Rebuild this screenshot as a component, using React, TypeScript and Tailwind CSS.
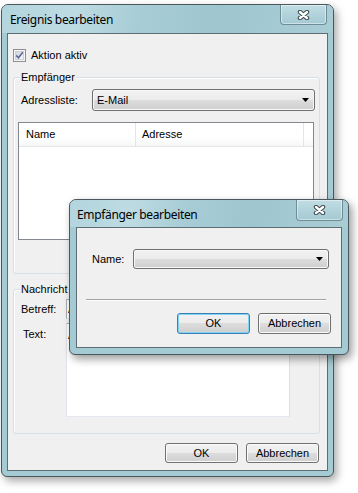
import React from "react";

function CloseX() {
  return (
    <svg width="13" height="10" viewBox="0 0 13 10">
      <path d="M3 2 L10 8 M10 2 L3 8" stroke="#3b4850" strokeWidth="4.4" strokeLinecap="round" fill="none" />
      <path d="M3 2 L10 8 M10 2 L3 8" stroke="#ffffff" strokeWidth="2.4" strokeLinecap="round" fill="none" />
    </svg>
  );
}

function CloseButton({ h }: { h: string }) {
  return (
    <div
      className={`flex ${h} w-[47px] items-center justify-center self-start rounded-b-[4px] border border-t-0 border-[#6e8d96] bg-[linear-gradient(to_bottom,#c1dde3_0%,#b2d3db_50%,#a4cad3_100%)] shadow-[inset_0_0_0_1px_rgba(255,255,255,0.45)]`}
    >
      <CloseX />
    </div>
  );
}

function Arrow() {
  return (
    <svg width="7" height="4" viewBox="0 0 7 4">
      <polygon points="0,0 7,0 3.5,4" fill="#000" />
    </svg>
  );
}

function Combo({ cls, text }: { cls: string; text?: string }) {
  return (
    <div
      className={`flex items-center justify-between rounded-[3px] border border-[#707070] bg-[linear-gradient(to_bottom,#f2f2f2_0%,#ebebeb_50%,#dddddd_50%,#cfcfcf_100%)] shadow-[inset_0_0_0_1px_#f8f8f8] pl-[4px] ${cls}`}
    >
      <span className="text-[11px] leading-[13px] text-black">{text}</span>
      <Arrow />
    </div>
  );
}

function Btn({ children, focused, cls }: { children: React.ReactNode; focused?: boolean; cls: string }) {
  return (
    <div
      className={`flex items-center justify-center rounded-[3px] border bg-[linear-gradient(to_bottom,#f2f2f2_0%,#ebebeb_50%,#dddddd_50%,#cfcfcf_100%)] text-[11px] leading-[13px] text-black ${
        focused
          ? "border-[#3c7fb1] shadow-[inset_0_0_0_1px_#7fd3f5]"
          : "border-[#707070] shadow-[inset_0_0_0_1px_#fbfbfb]"
      } ${cls}`}
    >
      {children}
    </div>
  );
}

function CheckBox() {
  return (
    <svg width="13" height="13" viewBox="0 0 13 13">
      <defs>
        <linearGradient id="cbg" x1="0" y1="0" x2="1" y2="1">
          <stop offset="0" stopColor="#d3d3d3" />
          <stop offset="1" stopColor="#f8f8f8" />
        </linearGradient>
      </defs>
      <rect x="0.5" y="0.5" width="12" height="12" fill="#f6f6f6" stroke="#8e8f8f" />
      <rect x="2.5" y="2.5" width="8" height="8" fill="url(#cbg)" stroke="#cfcfcf" />
      <path d="M3.2 6.4 L5.4 8.8 L9.8 3.2" stroke="#5a6c9e" strokeWidth="1.6" fill="none" />
    </svg>
  );
}

function Group({ label, cls, children }: { label: string; cls: string; children?: React.ReactNode }) {
  return (
    <div className={`relative rounded-[3px] border border-[#d5dfe5] shadow-[inset_1px_1px_0_#ffffff] ${cls}`}>
      <span className="absolute left-[6px] top-[-7px] bg-[#f0f0f0] px-[1px] text-[11px] leading-[13px] text-black">
        {label}
      </span>
      {children}
    </div>
  );
}

const titleBar =
  "bg-[linear-gradient(100deg,#b3d5dd_0%,#bddbe2_22%,#a7ccd5_42%,#9fc6cf_65%,#a9cdd5_100%)]";

export default function App() {
  return (
    <div className="relative h-[493px] w-[358px] overflow-hidden bg-white font-['Liberation_Sans',Arial,sans-serif]">
      <div className="pl-[1px] pt-[4px]">
        {/* Main window */}
        <div className="flex h-[473px] w-[333px] flex-col rounded-t-[7px] rounded-b-[6px] border border-[#4a585e] bg-[#a4cad3] shadow-[3px_4px_8px_rgba(0,0,0,0.35)]">
          <div className={`flex h-[28px] shrink-0 rounded-t-[6px] ${titleBar}`}>
            <div className="flex flex-1 items-center pl-[8px] pt-[1px] font-['Noto_Sans',sans-serif] text-[12px] tracking-[-0.35px] text-black">
              Ereignis bearbeiten
            </div>
            <div className="mr-[6px] flex">
              <CloseButton h="h-[20px]" />
            </div>
          </div>
          <div className="mx-[5px] mb-[5px] flex-1 border border-[#5d6d73] bg-[#f0f0f0]">
            <div className="flex flex-col pl-[5px] text-[11px] leading-[13px] text-black">
              <div className="mt-[15px] flex h-[13px] items-center gap-[5px]">
                <CheckBox />
                <span>Aktion aktiv</span>
              </div>

              <Group label="Empfänger" cls="mt-[15px] h-[197px] w-[307px]">
                <div className="mt-[11px] flex h-[22px] items-center">
                  <div className="w-[78px] pl-[7px]">Adressliste:</div>
                  <Combo cls="h-[22px] w-[223px] pr-[5px]" text="E-Mail" />
                </div>
                <div className="ml-[4px] mt-[11px] h-[118px] w-[296px] border border-[#828790] bg-white">
                  <div className="flex h-[24px] border-b border-[#e5e5e5] bg-[linear-gradient(to_bottom,#ffffff_0%,#ffffff_60%,#f6f7f8_100%)]">
                    <div className="flex w-[117px] items-center border-r border-[#e5e5e5] pl-[7px]">Name</div>
                    <div className="flex w-[168px] items-center border-r border-[#e5e5e5] pl-[6px]">Adresse</div>
                  </div>
                </div>
              </Group>

              <Group label="Nachricht" cls="mt-[15px] h-[145px] w-[307px]">
                <div className="mt-[9px] flex h-[20px] items-center">
                  <div className="w-[52px] pl-[7px]">Betreff:</div>
                  <div className="flex h-[20px] w-[248px] items-center border border-[#abadb3] border-b-[#e3e9ef] border-r-[#dbdfe6] bg-white pl-[1px]">
                    Alarm
                  </div>
                </div>
                <div className="mt-[4px] flex">
                  <div className="w-[52px] pl-[9px] pt-[5px]">Text:</div>
                  <div className="h-[94px] w-[224px] border border-[#abadb3] border-b-[#e3e9ef] border-l-[#e2e3ea] border-r-[#dbdfe6] bg-white pl-[1px] pt-[5px]">
                    Achtung
                  </div>
                </div>
              </Group>

              <div className="mt-[9px] flex justify-end gap-[8px] pr-[8px]">
                <Btn cls="h-[20px] w-[73px]">OK</Btn>
                <Btn cls="h-[20px] w-[73px]">Abbrechen</Btn>
              </div>
            </div>
          </div>
        </div>
      </div>

      {/* Overlay dialog */}
      <div className="absolute left-[69px] top-[199px] flex h-[156px] w-[280px] flex-col rounded-t-[7px] rounded-b-[6px] border border-[#4a585e] bg-[#a4cad3] shadow-[3px_4px_9px_rgba(0,0,0,0.4)]">
        <div className={`flex h-[27px] shrink-0 rounded-t-[6px] ${titleBar}`}>
          <div className="flex flex-1 items-center pl-[7px] pt-[2px] font-['Noto_Sans',sans-serif] text-[12px] tracking-[-0.35px] text-black">
            Empfänger bearbeiten
          </div>
          <div className="mr-[5px] flex">
            <CloseButton h="h-[21px]" />
          </div>
        </div>
        <div className="mx-[6px] mb-[6px] flex-1 border border-[#5d6d73] bg-[#f0f0f0]">
          <div className="flex flex-col text-[11px] leading-[13px] text-black">
            <div className="mt-[21px] flex h-[20px] items-center">
              <div className="w-[56px] pl-[15px]">Name:</div>
              <Combo cls="h-[20px] w-[196px] pr-[5px]" />
            </div>
            <div className="ml-[9px] mt-[30px] h-[2px] w-[240px] border-t border-b border-t-[#a0a0a0] border-b-white" />
            <div className="mt-[12px] flex justify-end gap-[8px] pr-[10px]">
              <Btn focused cls="h-[21px] w-[73px]">OK</Btn>
              <Btn cls="h-[21px] w-[73px]">Abbrechen</Btn>
            </div>
          </div>
        </div>
      </div>
    </div>
  );
}
